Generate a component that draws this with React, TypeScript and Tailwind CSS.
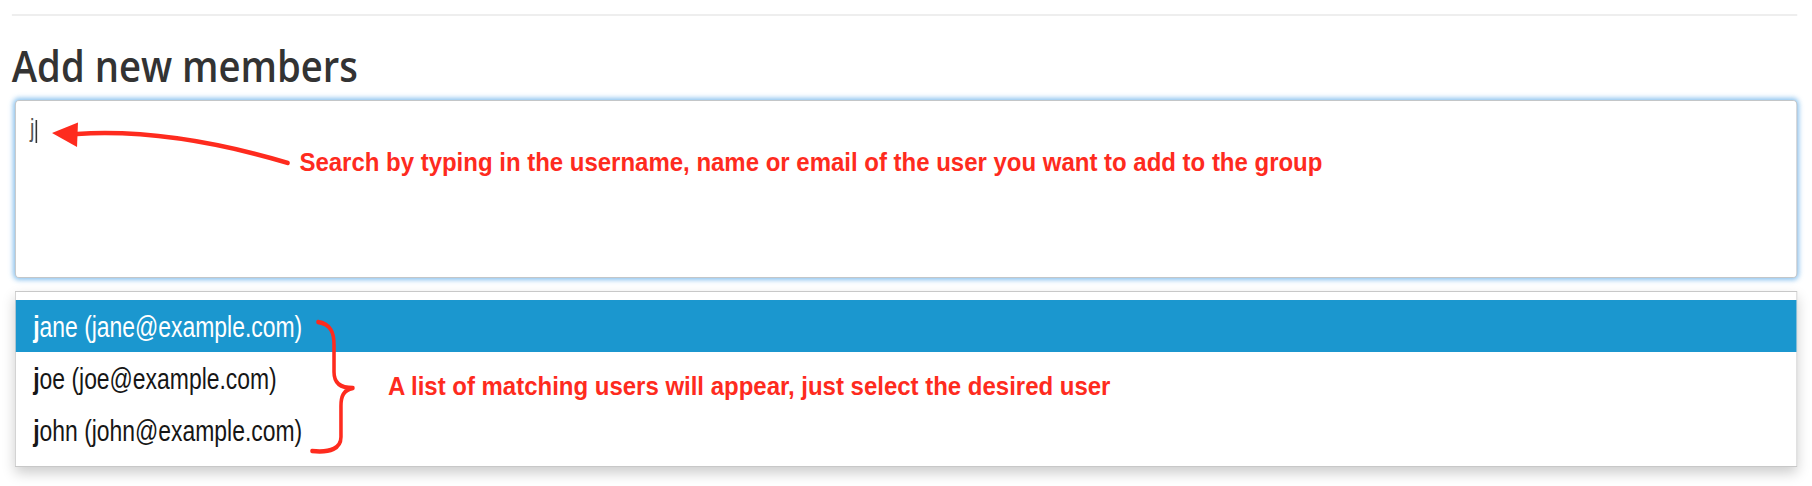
import React from "react";

// the reference is squeezed horizontally, so the page is laid out wide and scaled on x
const rows = [
  { name: "jane", email: "jane@example.com" },
  { name: "joe", email: "joe@example.com" },
  { name: "john", email: "john@example.com" },
];

const Annotations: React.FC = () => {
  return (
    <svg
      className="absolute left-0 top-0 pointer-events-none"
      width={2294}
      height={486}
      viewBox="0 0 2294 486"
    >
      <path
        d="M364.6,163 Q215,128 97.5,134"
        fill="none"
        stroke="#fe2b1e"
        strokeWidth={4.5}
        strokeLinecap="round"
      />
      <polygon points="65.8,133 98.7,122.5 97.5,147" fill="#fe2b1e" />
      <path
        d="M402.5,322 C419,324 422.8,333 422.8,345 L422.8,372 C422.8,383 430.4,388 446.8,388 C434.2,390 431.6,397 431.6,406 L431.6,437 C431.6,448 419,453 394.9,451"
        fill="none"
        stroke="#fe2b1e"
        strokeWidth={4.5}
        strokeLinecap="round"
        strokeLinejoin="round"
      />
    </svg>
  );
};

const App: React.FC = () => {
  return (
    <div className="w-full h-[486px] overflow-hidden bg-white">
      <div className="relative w-[2294px] h-[486px] origin-top-left scale-x-[0.79] pl-[15px] pr-[19px] pt-[14px]">
        <div className="h-[2px] bg-[#eeeeee]" />
        <h2 className="mt-[26px] origin-left scale-x-[1.125] font-['Open_Sans',sans-serif] font-semibold text-[43px] leading-[47px] text-[#333333]">
          Add new members
        </h2>

        <div className="ml-[4px] mt-[11px] h-[178px] rounded-[5px] border border-[#c2c2c2] bg-white shadow-[0_0_6px_2px_rgba(102,175,233,0.75)] pl-[18px] pt-[12px]">
          <div className="font-['Liberation_Sans',Arial,sans-serif] text-[25px] leading-[30px] text-[#555555]">
            j
            <span className="inline-block w-[2px] h-[23px] bg-[#333333] align-[-6px] ml-[1px]" />
          </div>
        </div>

        <div className="ml-[4px] mt-[13px] border border-[#c8c8c8] bg-white pt-[8px] pb-[10px] shadow-[0_6px_14px_rgba(0,0,0,0.2)] font-['Liberation_Sans',Arial,sans-serif] text-[29px]">
          {rows.map((row, i) => (
            <div
              key={row.name}
              className={
                i === 0
                  ? "h-[52px] pt-[3px] leading-[49px] pl-[22px] bg-[#1b97cf] text-white"
                  : "h-[52px] pt-[3px] leading-[49px] pl-[22px] text-[#161616]"
              }
            >
              <strong className="font-bold">j</strong>
              {row.name.slice(1)} ({row.email})
            </div>
          ))}
        </div>

        <Annotations />
        <span className="absolute left-[378.5px] top-[150px] origin-left scale-x-[1.19] whitespace-nowrap font-['Liberation_Sans',Arial,sans-serif] font-bold text-[25.5px] leading-none text-[#fe2b1e]">
          Search by typing in the username, name or email of the user you want to add to the group
        </span>
        <span className="absolute left-[491px] top-[374px] origin-left scale-x-[1.19] whitespace-nowrap font-['Liberation_Sans',Arial,sans-serif] font-bold text-[25.5px] leading-none text-[#fe2b1e]">
          A list of matching users will appear, just select the desired user
        </span>
      </div>
    </div>
  );
};

export default App;
